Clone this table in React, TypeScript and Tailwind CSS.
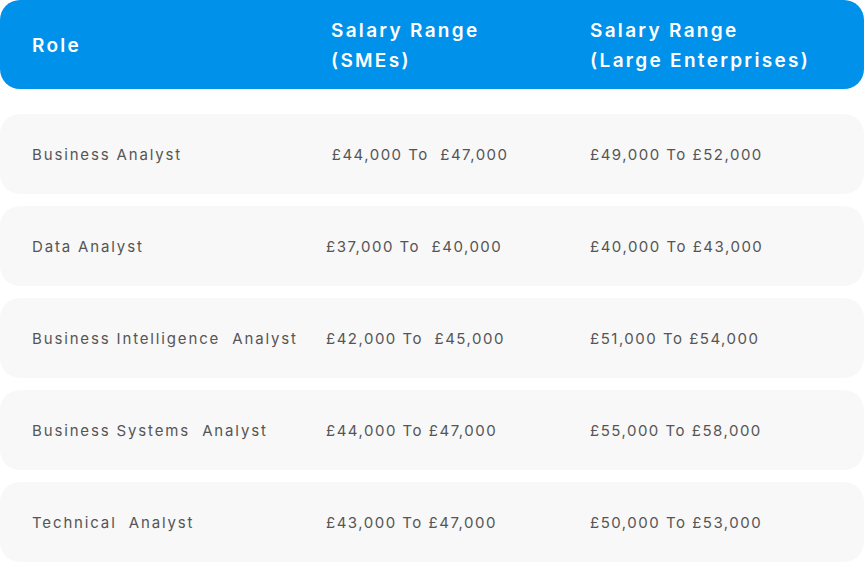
const rows = [
  { role: 'Business Analyst', sme: ' £44,000 To  £47,000', large: '£49,000 To £52,000' },
  { role: 'Data Analyst', sme: '£37,000 To  £40,000', large: '£40,000 To £43,000' },
  { role: 'Business Intelligence  Analyst', sme: '£42,000 To  £45,000', large: '£51,000 To £54,000' },
  { role: 'Business Systems  Analyst', sme: '£44,000 To £47,000', large: '£55,000 To £58,000' },
  { role: 'Technical  Analyst', sme: '£43,000 To £47,000', large: '£50,000 To £53,000' },
]

export default function App() {
  return (
    <div className="min-h-screen bg-white" style={{ fontFamily: 'Inter, "Noto Sans", sans-serif' }}>
      {/* Header */}
      <div className="flex h-[89px] items-center rounded-[20px] bg-[#0091ea] pl-8 pt-[2px] text-[19px] font-semibold leading-[30px] tracking-[2.3px] text-white">
        <div className="w-[299px]">Role</div>
        <div className="w-[259px]">
          Salary Range
          <br />
          (SMEs)
        </div>
        <div>
          Salary Range
          <br />
          (Large Enterprises)
        </div>
      </div>

      {/* Rows */}
      <div className="mt-[25px] flex flex-col gap-3">
        {rows.map((r) => (
          <div
            key={r.role}
            className="flex h-[80px] items-center whitespace-pre rounded-[20px] bg-[#f8f8f8] pl-8 pt-[2px] text-[15px] text-[#555555]"
          >
            <div className="w-[294px] tracking-[1.85px]">{r.role}</div>
            <div className="w-[264px] tracking-[1.5px]">{r.sme}</div>
            <div className="tracking-[1.5px]">{r.large}</div>
          </div>
        ))}
      </div>
    </div>
  )
}
